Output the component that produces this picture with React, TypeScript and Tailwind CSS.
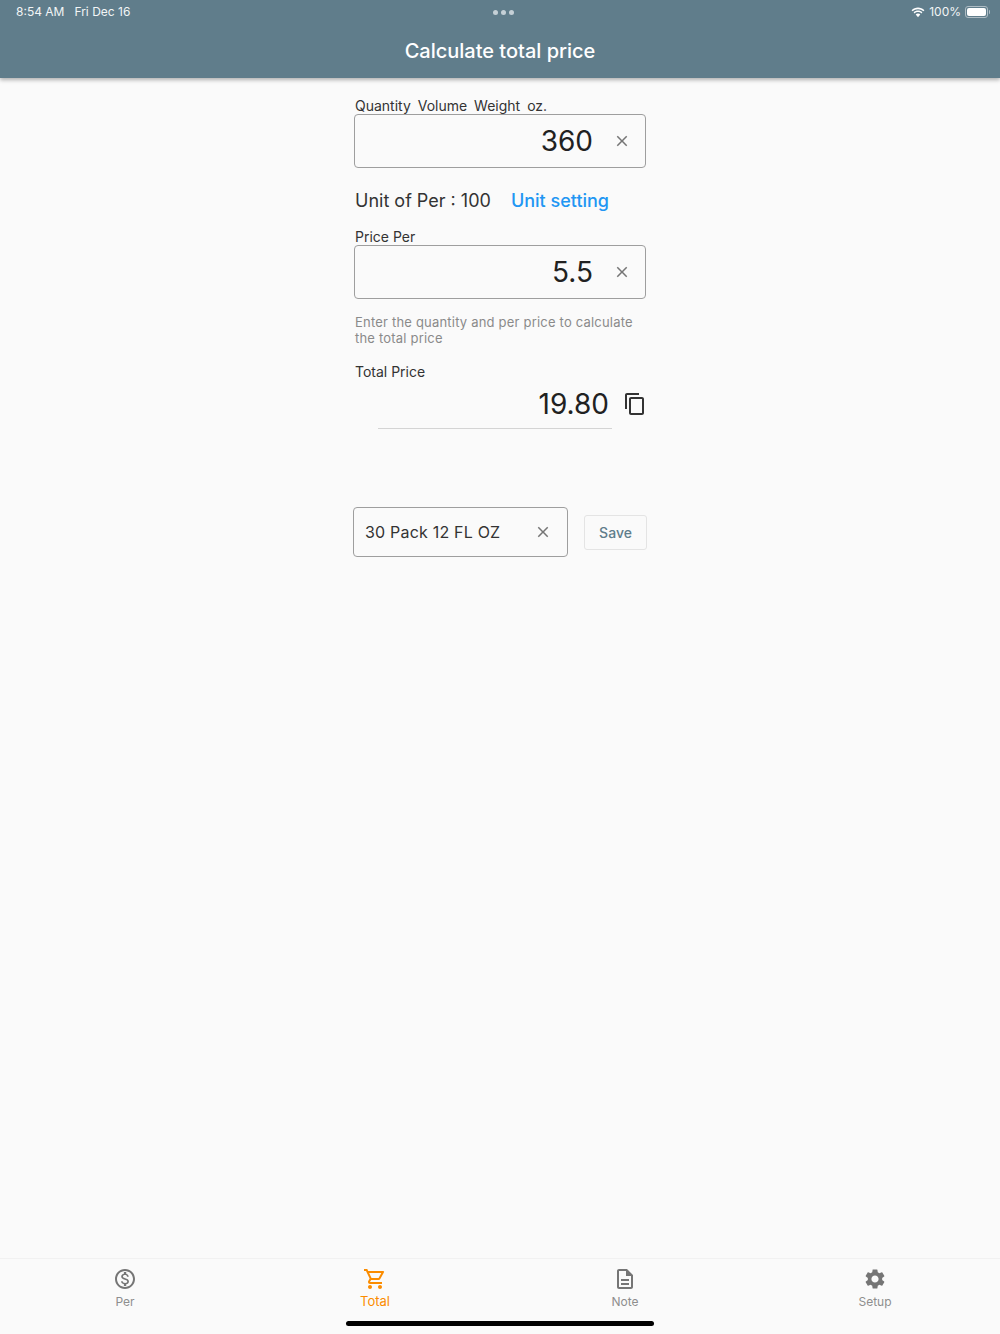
import React from "react";
import {
  MdClose,
  MdOutlineContentCopy,
  MdOutlineMonetizationOn,
  MdOutlineShoppingCart,
  MdOutlineDescription,
  MdSettings,
} from "react-icons/md";

function Field({ value }: { value: string }) {
  return (
    <div className="flex h-[54px] w-[292px] items-center rounded-[4px] border border-[#9e9e9e]">
      <div className="flex-1 pr-[20px] text-right text-[28px] leading-none text-[#212121]">{value}</div>
      <MdClose className="mr-[14px] text-[#757575]" size={18} />
    </div>
  );
}

function NavItem({ icon, label, active }: { icon: React.ReactNode; label: string; active?: boolean }) {
  return (
    <div className={`flex flex-1 flex-col items-center ${active ? "text-[#fb8c00]" : "text-[#757575]"}`}>
      <div className="h-[24px]">{icon}</div>
      <div className={active ? "mt-[1px] text-[13px] leading-[18px] text-[#fb8c00]" : "mt-[2px] text-[12px] leading-[18px] text-[#8e8e8e]"}>
        {label}
      </div>
    </div>
  );
}

export default function App() {
  return (
    <div className="relative flex h-[1334px] w-[1000px] flex-col overflow-hidden bg-[#fafafa] font-['Inter',sans-serif]">
      <header className="z-10 h-[78px] bg-[#607d8b] text-white shadow-[0_2px_4px_rgba(0,0,0,0.3)]">
        <div className="flex h-[24px] items-center justify-between pl-[16px] pr-[10px] text-[12px] text-[#f2f5f6]">
          <div className="flex w-[200px] gap-[10px]">
            <span>8:54 AM</span>
            <span>Fri Dec 16</span>
          </div>
          <div className="flex gap-[3px]">
            <span className="h-[5px] w-[5px] rounded-full bg-[#c5d0d6]" />
            <span className="h-[5px] w-[5px] rounded-full bg-[#c5d0d6]" />
            <span className="h-[5px] w-[5px] rounded-full bg-[#c5d0d6]" />
          </div>
          <div className="flex w-[200px] items-center justify-end gap-[4px]">
            <svg width="14" height="11" viewBox="0 0 14 11" fill="white">
              <path d="M7 2.2c2.1 0 4 .8 5.4 2.1l1-1.1C11.700 1.600 9.400.6 7 .6S2.300 1.600.6 3.200l1 1.100C3 3 4.900 2.200 7 2.200z" />
              <path d="M7 5.100c1.300 0 2.500.5 3.400 1.300l1-1.100C10.200 4.200 8.700 3.600 7 3.600s-3.200.6-4.400 1.700l1 1.100C4.500 5.600 5.700 5.100 7 5.100z" />
              <path d="M7 6.600c-.9 0-1.700.3-2.300.9L7 10.200l2.300-2.700c-.6-.6-1.400-.9-2.300-.9z" />
            </svg>
            <span>100%</span>
            <div className="flex items-center">
              <div className="h-[12px] w-[23px] rounded-[3px] border border-[#aebcc4] p-[1px]">
                <div className="h-full w-full rounded-[2px] bg-white" />
              </div>
              <div className="ml-[1px] h-[4px] w-[1px] rounded-r bg-[#aebcc4]" />
            </div>
          </div>
        </div>
        <h1 className="mt-[13px] text-center text-[20px] font-medium leading-[28px]">Calculate total price</h1>
      </header>

      <main className="flex flex-1 flex-col items-center">
        <div className="w-[294px] pt-[19px]">
          <div className="pl-[2px] text-[14px] leading-[17px] text-[#333] [word-spacing:3px]">Quantity Volume Weight oz.</div>
          <div className="pl-[1px]">
            <Field value="360" />
          </div>
          <div className="mt-[19px] flex h-[26px] items-center pl-[2px] text-[18px]">
            <span className="text-[#333]">Unit of Per : 100</span>
            <span className="ml-[20px] font-medium text-[#2196f3]">Unit setting</span>
          </div>
          <div className="mt-[15px] pl-[2px] text-[14px] leading-[17px] text-[#333]">Price Per</div>
          <div className="pl-[1px]">
            <Field value="5.5" />
          </div>
          <p className="mt-[15px] pl-[2px] pr-[2px] text-[13px] leading-[16px] tracking-[0.2px] text-[#8a8a8a]">
            Enter the quantity and per price to calculate the total price
          </p>
          <div className="mt-[17px] pl-[2px] text-[14px] leading-[17px] text-[#333]">Total Price</div>
          <div className="mt-[4px] flex items-start pl-[25px]">
            <div className="h-[45px] w-[234px] border-b border-[#d4d4d4] pr-[3px] pt-[2px] text-right text-[28px] leading-[36px] text-[#212121]">
              19.80
            </div>
            <MdOutlineContentCopy className="ml-[11px] mt-[8px] text-[#333]" size={24} />
          </div>
        </div>

        <div className="mt-[78px] flex w-[294px] items-center">
          <div className="flex h-[50px] w-[215px] items-center rounded-[4px] border border-[#9e9e9e] pl-[11px] pr-[15px]">
            <span className="flex-1 text-[16px] tracking-[0.2px] text-[#333]">30 Pack 12 FL OZ</span>
            <MdClose className="text-[#757575]" size={18} />
          </div>
          <button className="ml-[16px] h-[35px] w-[63px] rounded-[3px] border border-[#e4e4e4] text-[14px] font-medium text-[#607d8b]">
            Save
          </button>
        </div>
      </main>

      <nav className="flex h-[76px] border-t border-[#f1f1f1] pt-[8px]">
        <NavItem icon={<MdOutlineMonetizationOn size={24} />} label="Per" />
        <NavItem icon={<MdOutlineShoppingCart size={24} />} label="Total" active />
        <NavItem icon={<MdOutlineDescription size={24} />} label="Note" />
        <NavItem icon={<MdSettings size={24} />} label="Setup" />
      </nav>
      <div className="absolute bottom-[8px] left-[346px] h-[5px] w-[308px] rounded-full bg-black" />
    </div>
  );
}
